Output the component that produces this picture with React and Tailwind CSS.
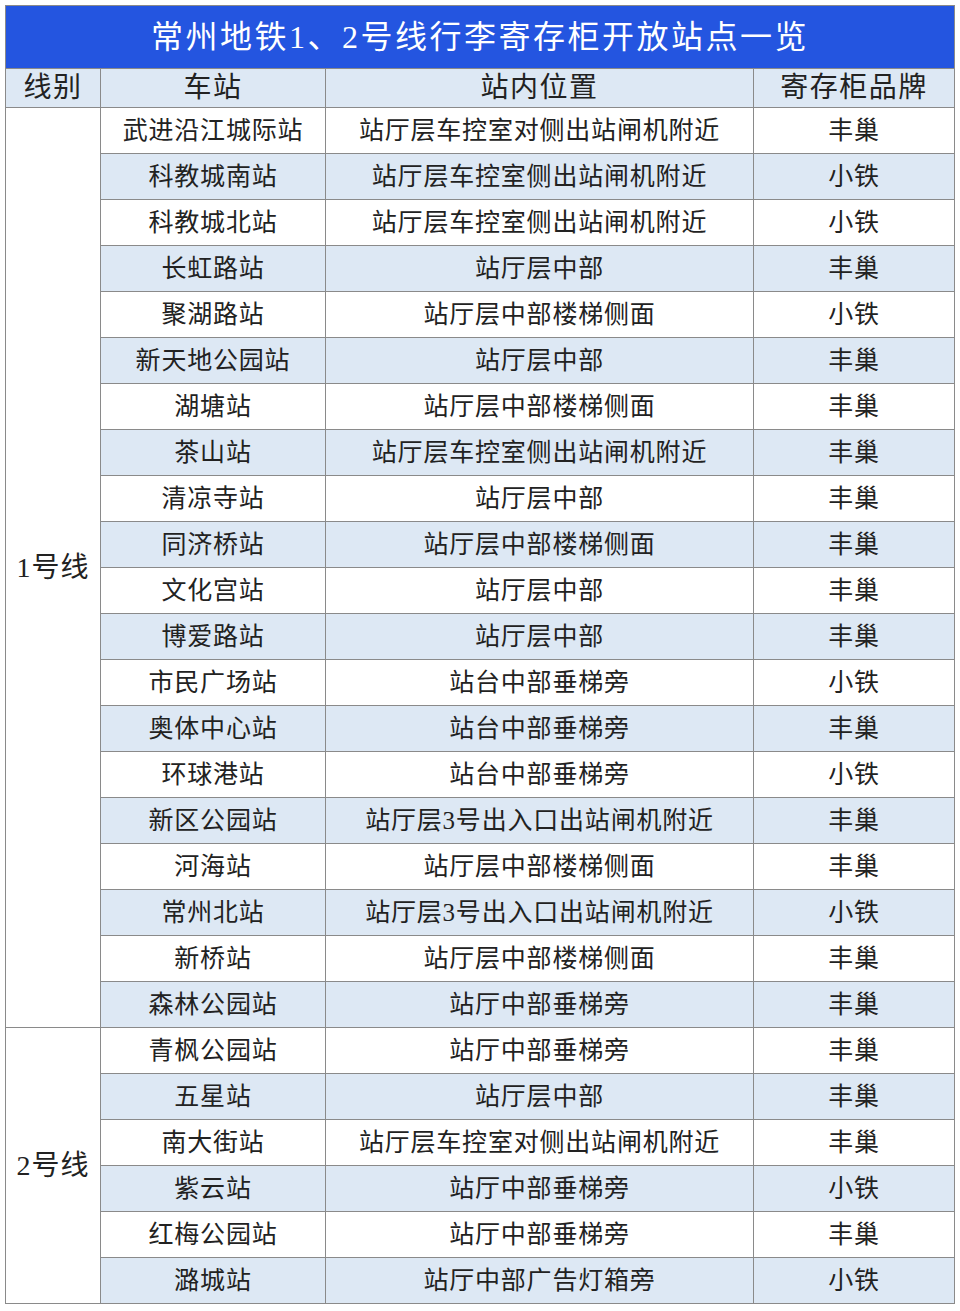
const LINE1 = [
  ["武进沿江城际站", "站厅层车控室对侧出站闸机附近", "丰巢"],
  ["科教城南站", "站厅层车控室侧出站闸机附近", "小铁"],
  ["科教城北站", "站厅层车控室侧出站闸机附近", "小铁"],
  ["长虹路站", "站厅层中部", "丰巢"],
  ["聚湖路站", "站厅层中部楼梯侧面", "小铁"],
  ["新天地公园站", "站厅层中部", "丰巢"],
  ["湖塘站", "站厅层中部楼梯侧面", "丰巢"],
  ["茶山站", "站厅层车控室侧出站闸机附近", "丰巢"],
  ["清凉寺站", "站厅层中部", "丰巢"],
  ["同济桥站", "站厅层中部楼梯侧面", "丰巢"],
  ["文化宫站", "站厅层中部", "丰巢"],
  ["博爱路站", "站厅层中部", "丰巢"],
  ["市民广场站", "站台中部垂梯旁", "小铁"],
  ["奥体中心站", "站台中部垂梯旁", "丰巢"],
  ["环球港站", "站台中部垂梯旁", "小铁"],
  ["新区公园站", "站厅层3号出入口出站闸机附近", "丰巢"],
  ["河海站", "站厅层中部楼梯侧面", "丰巢"],
  ["常州北站", "站厅层3号出入口出站闸机附近", "小铁"],
  ["新桥站", "站厅层中部楼梯侧面", "丰巢"],
  ["森林公园站", "站厅中部垂梯旁", "丰巢"],
];

const LINE2 = [
  ["青枫公园站", "站厅中部垂梯旁", "丰巢"],
  ["五星站", "站厅层中部", "丰巢"],
  ["南大街站", "站厅层车控室对侧出站闸机附近", "丰巢"],
  ["紫云站", "站厅中部垂梯旁", "小铁"],
  ["红梅公园站", "站厅中部垂梯旁", "丰巢"],
  ["潞城站", "站厅中部广告灯箱旁", "小铁"],
];

const cell = "border border-[#8a8a8a] text-center align-middle p-0";

function Rows({ label, rows }) {
  return rows.map((r, i) => {
    const stripe = i % 2 === 1 ? "bg-[#dde8f4]" : "bg-white";
    return (
      <tr key={r[0]} className="h-[46px]">
        {i === 0 && (
          <td
            rowSpan={rows.length}
            className={`${cell} bg-white text-[28px] tracking-[1px]`}
          >
            {label}
          </td>
        )}
        <td className={`${cell} ${stripe}`}>{r[0]}</td>
        <td className={`${cell} ${stripe}`}>{r[1]}</td>
        <td className={`${cell} ${stripe}`}>{r[2]}</td>
      </tr>
    );
  });
}

export default function App() {
  return (
    <div
      className="w-[960px] h-[1311px] bg-white px-[5px] pt-[5px]"
      style={{ fontFamily: '"Liberation Serif", "Noto Sans CJK SC", serif' }}
    >
      <table className="w-[950px] table-fixed text-[25px] tracking-[0.8px] leading-none text-[#222]">
        <colgroup>
          <col className="w-[95px]" />
          <col className="w-[225px]" />
          <col className="w-[428px]" />
          <col />
        </colgroup>
        <thead>
          <tr className="h-[63px]">
            <th
              colSpan={4}
              className="border border-[#8a8a8a] bg-[#2455e0] text-white font-normal text-[32px] tracking-[2.5px]"
            >
              常州地铁1、2号线行李寄存柜开放站点一览
            </th>
          </tr>
          <tr className="h-[39px] bg-[#dde8f4] text-[28px] tracking-[1.5px]">
            <th className={`${cell} font-normal`}>线别</th>
            <th className={`${cell} font-normal`}>车站</th>
            <th className={`${cell} font-normal`}>站内位置</th>
            <th className={`${cell} font-normal`}>寄存柜品牌</th>
          </tr>
        </thead>
        <tbody>
          <Rows label="1号线" rows={LINE1} />
          <Rows label="2号线" rows={LINE2} />
        </tbody>
      </table>
    </div>
  );
}
